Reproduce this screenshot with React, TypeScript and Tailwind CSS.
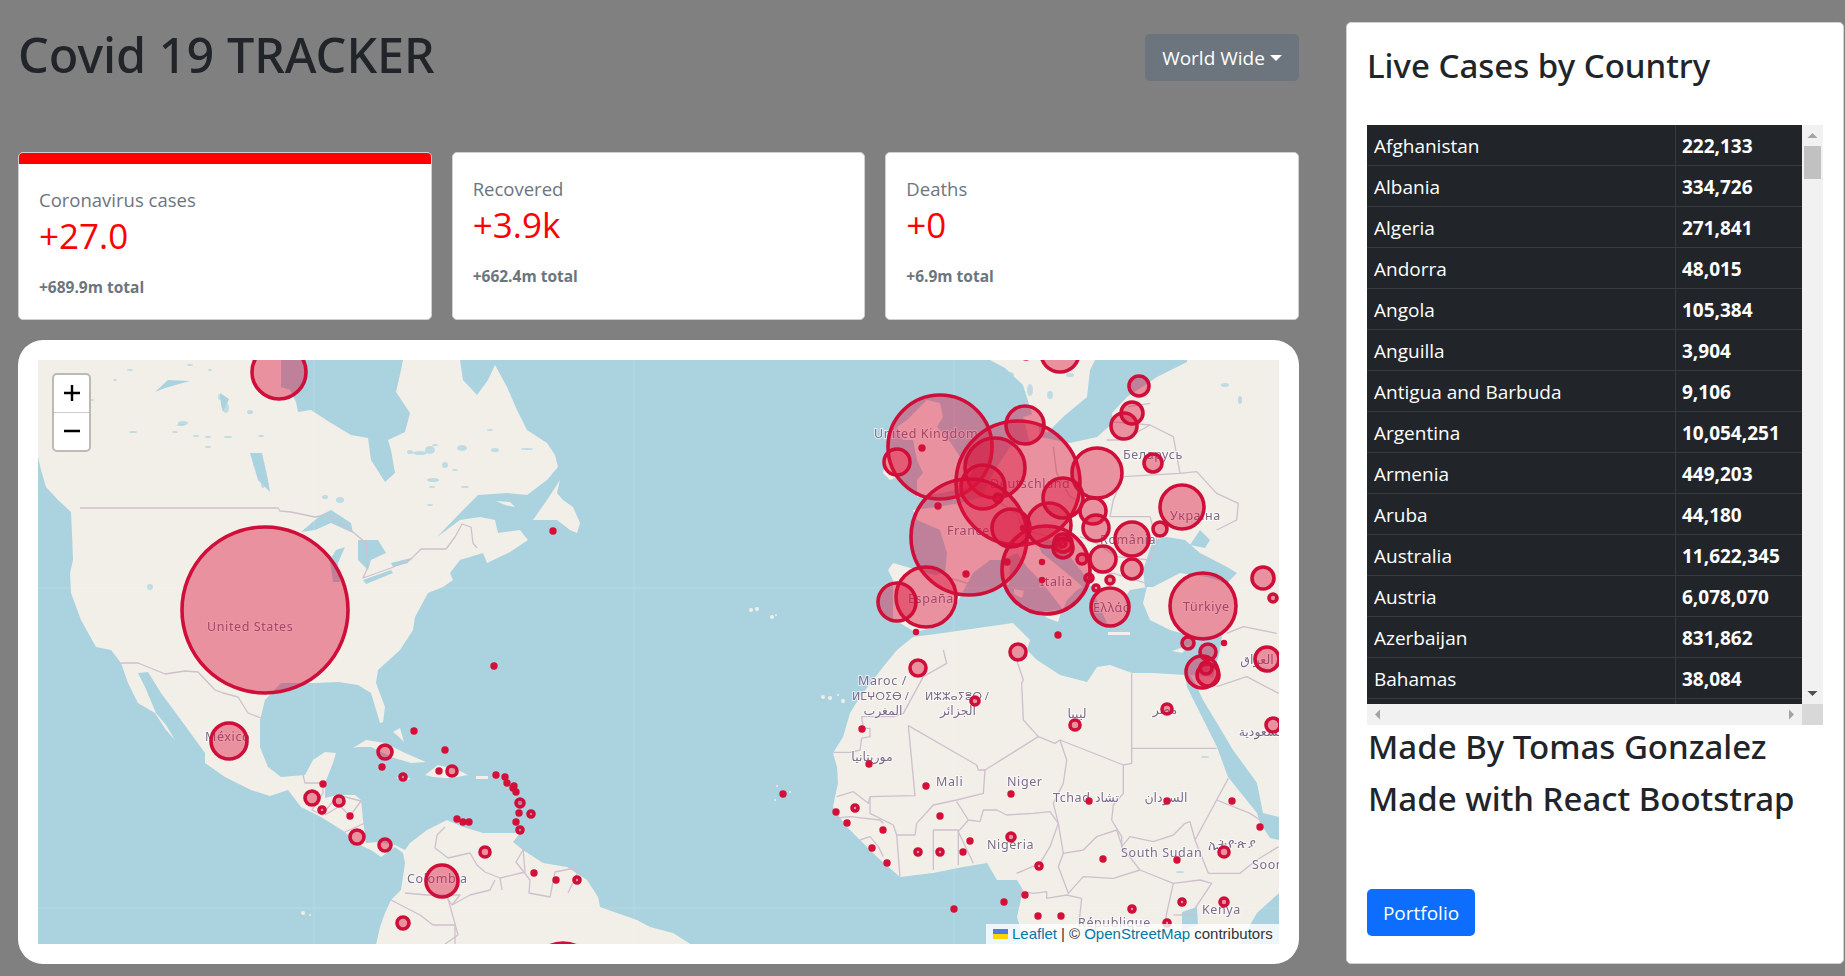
import React from "react";

const sans = "font-['Open_Sans','Noto_Sans',sans-serif]";
const heading = "font-['Noto_Sans','Open_Sans',sans-serif] font-medium";

const rows = [
  ["Afghanistan", "222,133"],
  ["Albania", "334,726"],
  ["Algeria", "271,841"],
  ["Andorra", "48,015"],
  ["Angola", "105,384"],
  ["Anguilla", "3,904"],
  ["Antigua and Barbuda", "9,106"],
  ["Argentina", "10,054,251"],
  ["Armenia", "449,203"],
  ["Aruba", "44,180"],
  ["Australia", "11,622,345"],
  ["Austria", "6,078,070"],
  ["Azerbaijan", "831,862"],
  ["Bahamas", "38,084"],
  ["", ""],
];

// x, y, r in page pixels
const circles: number[][] = [
  [279, 372, 28], [265, 610, 84], [229, 741, 19], [385, 752, 8], [403, 777, 4], [452, 771, 6], [312, 798, 8],
  [339, 801, 6], [322, 810, 4], [357, 837, 8], [385, 845, 7], [442, 881, 17], [485, 852, 6], [403, 923, 7],
  [520, 803, 5], [531, 814, 4], [520, 830, 4], [577, 880, 4], [563, 975, 33],
  [553, 531, 3], [494, 666, 3], [414, 731, 3], [445, 750, 3], [382, 767, 3], [439, 771, 3], [496, 775, 3],
  [323, 784, 3], [350, 816, 3], [505, 777, 3], [507, 783, 3], [514, 786, 3], [513, 788, 3], [516, 792, 3],
  [519, 813, 3], [516, 822, 3], [457, 819, 3], [463, 822, 3], [469, 822, 3], [534, 873, 3], [556, 880, 3],
  [940, 447, 53], [897, 462, 14], [1018, 483, 63], [995, 468, 31], [983, 487, 23], [1025, 425, 20], [1097, 473, 26],
  [969, 537, 59], [1046, 570, 45], [926, 597, 31], [897, 602, 20], [1011, 528, 20], [1049, 525, 23], [1063, 498, 21],
  [1093, 511, 14], [1096, 528, 14], [1132, 539, 18], [1182, 507, 23], [1160, 529, 8], [1103, 559, 14], [1132, 569, 11],
  [1110, 607, 20], [1203, 606, 34], [1263, 578, 12], [1273, 598, 5], [1153, 463, 10], [1124, 426, 14], [1132, 413, 12],
  [1139, 386, 11], [1063, 543, 10], [1062, 543, 5], [1063, 548, 11], [1089, 578, 5], [1110, 580, 5], [1082, 559, 6],
  [1096, 588, 4], [1188, 643, 7], [1208, 652, 9], [1202, 672, 17], [1208, 675, 12], [1206, 668, 7], [1267, 659, 13],
  [1018, 652, 9], [918, 668, 9], [1060, 353, 20], [1026, 354, 6],
  [922, 448, 3], [938, 506, 3], [966, 574, 3], [1007, 562, 3], [1042, 562, 2.5], [1042, 580, 2.5], [916, 632, 2.5],
  [1058, 635, 3], [1224, 643, 2.5], [998, 498, 5], [1023, 528, 2.5],
  [783, 794, 3], [836, 812, 3], [855, 808, 4], [847, 823, 3], [883, 830, 3], [872, 848, 3], [887, 863, 3], [918, 852, 4],
  [940, 852, 4], [963, 852, 3], [970, 841, 3], [940, 816, 3], [926, 786, 3], [869, 764, 3], [862, 729, 3], [975, 701, 5],
  [1075, 725, 6], [1167, 709, 6], [1011, 794, 3], [1011, 837, 5], [1039, 866, 4], [1089, 801, 3], [1167, 801, 3],
  [1232, 801, 3], [1260, 827, 3], [1224, 852, 6], [1177, 860, 3], [1103, 859, 3], [1182, 902, 4], [1224, 902, 5],
  [1132, 909, 4], [1167, 923, 4], [1025, 895, 3], [1004, 902, 3], [954, 909, 3], [1038, 916, 3], [1061, 916, 3], [1273, 725, 8],
];

// text, x, baseline, anchor
const labels: [string, number, number, "start" | "middle"][] = [
  ["United States", 207, 631, "start"], ["México", 205, 741, "start"], ["Colombia", 407, 883, "start"],
  ["United Kingdom", 874, 438, "start"], ["Deutschland", 990, 488, "start"], ["France", 947, 535, "start"],
  ["España", 908, 603, "start"], ["Italia", 1040, 586, "start"], ["Ελλάς", 1093, 612, "start"],
  ["Türkiye", 1183, 611, "start"], ["Україна", 1170, 520, "start"], ["România", 1100, 544, "start"],
  ["Беларусь", 1123, 459, "start"], ["Maroc /", 858, 685, "start"], ["ⵍⵎⵖⵔⵉⴱ /", 852, 700, "start"],
  ["ⵍⵣⵣⴰⵢⴻⵔ /", 925, 700, "start"], ["المغرب", 883, 715, "middle"], ["الجزائر", 958, 715, "middle"],
  ["موريتانيا", 872, 761, "middle"], ["Mali", 936, 786, "start"], ["Niger", 1007, 786, "start"], ["Tchad", 1053, 802, "start"],
  ["تشاد", 1107, 802, "middle"], ["السودان", 1166, 802, "middle"], ["Nigeria", 987, 849, "start"],
  ["South Sudan", 1121, 857, "start"], ["ليبيا", 1077, 718, "middle"], ["مصر", 1165, 714, "middle"],
  ["السعودية", 1262, 736, "middle"], ["العراق", 1257, 664, "middle"], ["ኢትዮጵያ", 1232, 848, "middle"],
  ["Soomaaliya", 1252, 869, "start"], ["Kenya", 1202, 914, "start"], ["République", 1078, 927, "start"],
];

const lakes: number[][] = [
  [183, 423, 5, 2], [228, 437, 4, 1], [196, 436, 3, 1], [175, 432, 3, 1], [208, 447, 3, 1], [261, 436, 3, 1], [340, 500, 4, 3],
  [420, 453, 7, 2], [430, 450, 5, 4], [462, 448, 5, 3], [400, 428, 6, 2], [433, 480, 6, 2], [445, 465, 3, 3], [455, 470, 3, 1],
  [430, 505, 3, 1], [150, 587, 3, 3], [64, 540, 2, 4], [490, 430, 3, 1], [527, 449, 6, 1], [220, 397, 2, 3], [226, 408, 3, 5],
  [250, 412, 3, 2], [181, 425, 4, 1], [133, 432, 4, 1], [208, 437, 3, 1], [255, 463, 2, 4], [263, 483, 2, 5], [325, 497, 3, 2],
  [381, 463, 2, 3], [410, 452, 3, 2], [435, 445, 3, 1], [495, 450, 4, 2], [465, 487, 4, 1], [432, 487, 3, 1], [92, 400, 2, 1],
  [115, 380, 2, 1], [130, 370, 3, 1], [190, 365, 3, 1], [210, 370, 2, 1], [1030, 390, 3, 6], [1050, 395, 3, 4], [1070, 375, 4, 2],
  [1010, 375, 4, 3], [1225, 385, 4, 2], [1240, 400, 2, 4], [1180, 872, 4, 1], [1205, 757, 4, 1],
];

const americas =
  "38,360 38,457 41,470 46,487 58,500 71,512 72,533 73,560 70,573 71,593 81,620 96,647 111,650 121,663 128,683 138,703 155,713 166,730 175,740 166,725 156,713 145,687 138,673 148,672 161,693 181,720 205,753 205,763 225,777 251,790 270,796 288,790 301,807 321,817 345,832 355,843 371,850 381,857 395,847 403,853 405,863 403,877 401,890 391,900 385,913 380,927 376,945 692,945 673,933 650,927 637,920 617,913 600,907 598,897 587,880 567,867 543,863 523,850 513,842 520,833 500,833 483,833 463,827 447,820 427,830 410,843 405,850 395,845 378,842 366,843 363,820 361,800 355,795 338,795 325,798 325,783 333,763 336,753 325,752 313,760 305,775 281,777 268,767 260,747 260,720 265,700 281,683 315,683 338,682 358,685 371,693 380,723 383,722 385,707 376,683 378,670 400,650 413,630 415,617 428,593 443,587 453,580 450,573 460,560 483,553 487,563 510,552 528,540 520,530 498,533 495,520 480,517 460,520 437,537 463,510 478,495 507,493 527,495 547,480 558,467 555,455 547,443 527,430 517,410 507,387 495,365 488,380 477,395 463,380 460,360";
const hudson =
  "281,360 281,387 290,390 296,402 298,412 311,410 331,423 351,435 368,438 371,460 385,482 395,473 391,450 388,440 405,432 410,413 396,392 401,370 403,360";
const eurasia =
  "1279,360 1279,817 1263,813 1257,783 1233,750 1217,723 1203,700 1195,683 1190,675 1213,677 1220,650 1222,636 1195,637 1170,630 1150,620 1143,603 1147,587 1130,590 1125,597 1128,617 1117,627 1107,623 1098,603 1093,590 1083,573 1067,553 1050,540 1047,537 1037,543 1042,553 1063,570 1083,587 1077,590 1067,600 1063,610 1058,603 1040,580 1027,567 1017,553 1003,560 990,560 973,573 960,597 950,617 933,628 915,632 900,623 893,620 893,580 888,570 893,563 935,575 945,573 947,553 940,530 917,520 913,510 937,507 960,503 982,497 993,473 1010,447 1030,443 1023,417 1037,413 1040,437 1070,443 1097,437 1113,423 1112,413 1127,397 1157,377 1187,362 1187,360";
const africa =
  "913,637 943,633 1013,623 1030,640 1027,650 1037,660 1060,675 1087,682 1097,667 1110,665 1132,673 1153,673 1185,675 1187,687 1200,713 1217,747 1228,777 1257,813 1260,823 1270,838 1279,840 1279,893 1257,913 1243,937 1240,945 1027,945 1023,937 1017,917 1023,890 1017,880 997,880 987,863 963,867 933,873 900,877 877,857 860,840 845,825 833,807 835,797 838,783 837,767 833,753 843,737 850,713 860,697 883,667 897,650";

function Poly({ points, fill }: { points: string; fill: string }) {
  return <polygon points={points} fill={fill} />;
}

function MapDrawing() {
  const land = "#f2efe9";
  const water = "#aad3df";
  return (
    <svg viewBox="38 360 1241 584" className="absolute inset-0 h-full w-full blur-[0.4px]">
      <rect x="38" y="360" width="1241" height="584" fill={water} />
      <Poly points={americas} fill={land} />
      <Poly points={hudson} fill={water} />
      <Poly points={eurasia} fill={land} />
      <Poly points={africa} fill={land} />
      {/* scandinavia, islands */}
      <Poly points="990,360 1005,368 1023,385 1033,417 1047,433 1063,417 1087,397 1090,370 1095,360" fill={land} />
      <Poly points="927,400 940,403 943,417 937,427 947,437 960,457 973,470 967,487 943,493 917,497 917,480 923,473 917,460 913,440 903,440 897,427 907,420" fill={land} />
      <Poly points="883,473 887,453 903,450 912,460 907,473 890,480" fill={land} />
      <Poly points="560,480 547,500 533,520 557,520 570,530 577,533 580,523 573,507 563,500 557,493" fill={land} />
      <Poly points="353,748 366,740 385,743 405,753 426,762 411,763 391,757 371,747 358,747" fill={land} />
      <Poly points="425,775 438,765 458,770 468,775 452,778 445,778 433,777" fill={land} />
      <Poly points="476,776 488,776 488,779 476,779" fill={land} />
      <Poly points="396,777 411,778 408,780 398,779" fill={land} />
      <Poly points="1014,589 1024,591 1022,598 1014,594" fill={land} />
      <Poly points="1005,532 1011,534 1010,552 1004,553" fill={land} />
      <Poly points="1001,563 1010,565 1009,585 1001,583" fill={land} />
      <Poly points="1042,612 1062,609 1058,622 1047,618" fill={land} />
      <Poly points="1108,632 1130,632 1130,635 1108,635" fill={land} />
      <Poly points="1172,651 1190,645 1182,653" fill={land} />
      <Poly points="915,610 916,612 914,612" fill={land} />
      <Poly points="496,501 510,502 515,507 505,505" fill={land} />
      <Poly points="393,732 400,728 404,742 398,736" fill={land} />
      {[[751, 610, 2], [757, 609, 2], [772, 617, 2], [776, 615, 1], [823, 697, 2], [830, 698, 2], [843, 701, 2], [838, 695, 1], [777, 786, 1], [790, 792, 1], [775, 800, 1], [303, 913, 2], [310, 915, 1]].map(([cx, cy, r], i) => (
        <circle key={i} cx={cx} cy={cy} r={r} fill={land} />
      ))}

      {/* lakes and inland seas */}
      <Poly points="301,532 321,515 331,510 351,523 353,533 331,523 315,530" fill={water} />
      <Poly points="330,560 333,582 340,582 338,563 345,547 336,550" fill={water} />
      <Poly points="358,540 378,540 386,553 371,560 368,570 358,560" fill={water} />
      <Poly points="363,580 391,570 393,573 366,584" fill={water} />
      <Poly points="391,563 411,558 408,563 393,567" fill={water} />
      <Poly points="155,392 168,380 190,381 165,388" fill={water} />
      <Poly points="250,453 262,453 268,480 270,492 258,480" fill={water} />
      <Poly points="220,393 229,399 223,412 221,405" fill={water} />
      <Poly points="1143,570 1153,540 1167,537 1185,540 1200,553 1227,567 1237,573 1227,583 1207,577 1180,573 1153,587 1145,587" fill={water} />
      <Poly points="1190,545 1200,530 1210,540 1205,548" fill={water} />
      <Poly points="1182,912 1197,907 1198,925 1182,930" fill={water} />
      {lakes.map(([cx, cy, rx, ry], i) => (
        <ellipse key={i} cx={cx} cy={cy} rx={rx} ry={ry} fill={water} opacity={0.7} />
      ))}

      {/* tile seams */}
      <g stroke="#ffffff" strokeOpacity="0.14" strokeWidth="1">
        <path d="M314 360V944M634 360V944M954 360V944M38 588H1279M38 908H1279" />
      </g>

      {/* borders */}
      <g fill="none" stroke="#cfc0cd" strokeWidth="1.3" strokeLinejoin="round">
        <polyline points="80,508 278,508 280,511 291,512 315,517 326,515 353,532 366,543 368,567 363,578 391,568 410,560 421,549 446,549 455,537 462,524 471,527 473,543 477,548" />
        <polyline points="121,663 138,663 165,674 185,671 198,672 215,690 223,693 238,697 248,713 261,718" />
        <polyline points="303,775 305,783 323,783 323,793 312,810 322,815 338,795 361,801 350,816 340,806 325,815" />
        <polyline points="345,832 365,823" />
        <polyline points="445,827 437,835 435,848 448,858 470,853 477,865 485,872 500,878 502,890" />
        <polyline points="500,878 525,872 523,848" />
        <polyline points="523,850 516,862 530,880 529,893 550,897 555,872 575,868 578,872 568,893" />
        <polyline points="405,893 427,895 445,895 452,905 470,895 490,890 495,880" />
        <polyline points="391,900 420,915 433,925 455,925 455,944" />
        <polyline points="452,905 460,895 447,895 458,935 445,944" />
      </g>
      <g transform="translate(820 650) scale(0.33333)" fill="none" stroke="#cfc0cd" strokeWidth="4" strokeLinejoin="round">
        <polyline points="40,307 90,307 120,300 125,265 150,260 150,235 130,235 125,200 220,200 250,190 310,80 380,40 370,0" />
        <polyline points="265,227 470,345 475,360 495,360 655,260 705,280 720,270 910,345 935,340 935,70" />
        <polyline points="590,30 610,90 605,100 610,210 655,260" />
        <polyline points="265,227 285,437 150,440 145,460 100,425 50,440" />
        <polyline points="150,440 150,490 220,525 230,555 285,555 290,520 340,465 410,450 490,430 495,360" />
        <polyline points="410,455 445,510 480,515 490,480 530,480 560,495 640,490 690,485 715,520 690,590 660,640 590,670" />
        <polyline points="720,270 740,330 730,400 700,460 715,520 730,610 790,600 830,560 890,540 905,585" />
        <polyline points="910,345 910,430 880,465 875,510 905,560 905,590 930,560 1000,575 1060,555 1095,520 1110,515 1125,570 1190,450 1225,385" />
        <polyline points="935,295 1190,295" />
        <polyline points="340,540 340,660" />
        <polyline points="340,540 415,540 415,645" />
        <polyline points="445,510 415,545 460,640" />
        <polyline points="230,555 240,680" />
        <polyline points="120,570 150,560 175,590 190,620" />
        <polyline points="40,505 90,500 180,510 190,520" />
        <polyline points="730,610 715,650 745,730 790,680 880,685 960,660 1060,700 1140,690 1175,700 1125,775" />
        <polyline points="1060,700 1040,790 1030,860" />
        <polyline points="1125,795 1060,795" />
        <polyline points="1165,670 1260,670 1310,630 1376,590" />
        <polyline points="905,590 960,660" />
        <polyline points="1125,570 1165,670" />
        <polyline points="590,720 640,730 680,725 680,745 740,735 785,745 770,885" />
        <polyline points="1190,450 1290,490 1320,510" />
        <polyline points="1190,110 1280,80 1376,130" />
      </g>
      <g transform="translate(850 340) scale(0.33333)" fill="none" stroke="#cfc0cd" strokeWidth="4" strokeLinejoin="round">
        <polyline points="420,470 500,520 520,570 600,590" />
        <polyline points="285,710 370,735" />
        <polyline points="610,320 620,400 660,470 700,490" />
        <polyline points="820,410 790,480 780,530 900,530 920,600 900,660 800,650 740,610 690,590" />
        <polyline points="820,410 990,400 1040,395 1100,460 1165,490 1160,540 1100,570" />
        <polyline points="770,300 820,300 900,255 970,290 990,400" />
        <polyline points="780,245 900,255" />
        <polyline points="835,200 900,190" />
        <polyline points="890,730 790,700 740,700" />
        <polyline points="1280,880 1180,860 1130,880" />
      </g>

      {/* place names */}
      <g fill="#7b6a8a" stroke="#ffffff" strokeOpacity="0.65" strokeWidth="2" fontSize="12.5" letterSpacing="0.6" style={{ paintOrder: "stroke", fontFamily: "'Noto Sans','DejaVu Sans',sans-serif" }}>
        {labels.map(([t, x, y, a]) => (
          <text key={t + x} x={x} y={y} textAnchor={a} fontSize={t.startsWith("ⵍ") ? 11 : undefined} letterSpacing={t.startsWith("ⵍ") ? 0 : undefined}>
            {t}
          </text>
        ))}
      </g>

      {/* case circles */}
      <g fill="#dc143c" fillOpacity="0.43" stroke="#cf0f3a" strokeWidth="3.6">
        {circles.map(([x, y, r], i) =>
          r <= 3 ? (
            <circle key={i} cx={x} cy={y} r={r + 0.7} fillOpacity="1" strokeWidth="0" fill="#d40f38" />
          ) : (
            <circle key={i} cx={x} cy={y} r={r - 1} />
          )
        )}
      </g>
    </svg>
  );
}

function StatCard({ title, value, total, active }: { title: string; value: string; total: string; active?: boolean }) {
  return (
    <div className="h-[168px] w-[414px] overflow-hidden rounded-[5px] border border-[#d0d0d0] bg-white">
      {active && <div className="h-[11px] bg-[#ff0000]" />}
      <div className="px-[20px] pt-[21px]">
        <div className="text-[18.5px] leading-[30px] text-[#6c757d]">{title}</div>
        <div className="text-[35px] leading-[42px] text-[#ff0000]">{value}</div>
        <div className="mt-[18px] text-[15.5px] leading-[24px] font-bold text-[#6c757d]">{total}</div>
      </div>
    </div>
  );
}

function LiveTable() {
  return (
    <div className="flex h-[600px] w-[456px] flex-col">
      <div className="flex h-[579px]">
        <div className="h-[579px] w-[435px] overflow-hidden bg-[#212529] text-[19px] text-white">
          {rows.map(([name, cases], i) => (
            <div key={i} className="flex h-[41px] border-b border-[#373b3e]">
              <div className="w-[309px] border-r border-[#373b3e] pl-[7px] pt-[3px] leading-[37px]">{name}</div>
              <div className="pl-[6px] pt-[3px] leading-[37px] font-bold">{cases}</div>
            </div>
          ))}
        </div>
        <div className="flex h-[579px] w-[21px] flex-col items-center bg-[#f1f1f1]">
          <svg width="21" height="21" viewBox="0 0 21 21">
            <path d="M5.5 13L10.5 8L15.5 13Z" fill="#a3a3a3" />
          </svg>
          <div className="h-[33px] w-[17px] bg-[#c1c1c1]" />
          <div className="flex-1" />
          <svg width="21" height="21" viewBox="0 0 21 21">
            <path d="M5.5 8L10.5 13L15.5 8Z" fill="#505050" />
          </svg>
        </div>
      </div>
      <div className="flex h-[21px]">
        <div className="flex w-[435px] items-center justify-between bg-[#f1f1f1]">
          <svg width="21" height="21" viewBox="0 0 21 21">
            <path d="M13 5.5L8 10.5L13 15.5Z" fill="#a3a3a3" />
          </svg>
          <svg width="21" height="21" viewBox="0 0 21 21">
            <path d="M8 5.5L13 10.5L8 15.5Z" fill="#a3a3a3" />
          </svg>
        </div>
        <div className="w-[21px] bg-[#d8d8d8]" />
      </div>
    </div>
  );
}

export default function App() {
  return (
    <div className={`flex h-[976px] w-[1845px] overflow-hidden bg-[#808080] text-[#212529] ${sans}`}>
      <div className="w-[1281px] ml-[18px] pt-[24px]">
        <div className="flex h-[128px] items-start justify-between">
          <h1 className={`text-[48.5px] leading-[60px] text-[#212529] ${heading}`}>Covid 19 TRACKER</h1>
          <button className="mt-[10px] flex h-[47px] w-[154px] items-center justify-center rounded-[5px] bg-[#6c757d] pt-[1px] text-[19px] text-white">
            World Wide
            <span className="ml-[5px] h-0 w-0 border-x-[6px] border-t-[6px] border-x-transparent border-t-white" />
          </button>
        </div>
        <div className="flex gap-[20px]">
          <StatCard active title="Coronavirus cases" value="+27.0" total="+689.9m total" />
          <StatCard title="Recovered" value="+3.9k" total="+662.4m total" />
          <StatCard title="Deaths" value="+0" total="+6.9m total" />
        </div>
        <div className="mt-[20px] h-[624px] rounded-[25px] bg-white p-[20px]">
          <div className="relative h-[584px] w-[1241px] overflow-hidden">
            <MapDrawing />
            <div className="absolute left-[14px] top-[13px] w-[39px] overflow-hidden rounded-[5px] border-2 border-[#bcbab5] bg-white text-black">
              <div className="flex h-[38px] items-center justify-center border-b border-[#ccc] pb-[2px]">
                <svg width="18" height="18" viewBox="0 0 18 18">
                  <path d="M9 1V17M1 9H17" stroke="#000" strokeWidth="2.4" />
                </svg>
              </div>
              <div className="flex h-[37px] items-center justify-center pb-[2px]">
                <svg width="18" height="18" viewBox="0 0 18 18">
                  <path d="M1 9H17" stroke="#000" strokeWidth="2.4" />
                </svg>
              </div>
            </div>
            <div className="absolute bottom-0 right-0 flex h-[20px] w-[293px] items-center whitespace-nowrap bg-white/80 pl-[7px] font-['Liberation_Sans',sans-serif] text-[15px] text-[#333]">
              <svg width="15" height="10" viewBox="0 0 15 10" className="mr-[4px]">
                <rect width="15" height="5" fill="#4c7be1" />
                <rect y="5" width="15" height="5" fill="#ffd500" />
              </svg>
              <span className="text-[#0078a8]">Leaflet</span>
              <span className="mx-[4px]">|</span>
              <span>©&nbsp;</span>
              <span className="text-[#0078a8]">OpenStreetMap</span>
              <span>&nbsp;contributors</span>
            </div>
          </div>
        </div>
      </div>
      <div className="ml-[47px] mt-[22px] h-[942px] w-[498px] rounded-[5px] border border-[#d0d0d0] bg-white pl-[20px] pt-[19px]">
        <h2 className={`h-[83px] text-[33px] leading-[48px] ${heading}`}>Live Cases by Country</h2>
        <LiveTable />
        <div className={`pl-[1px] text-[33px] ${heading}`}>
          <div className="h-[44px] leading-[44px]">Made By Tomas Gonzalez</div>
          <div className="mt-[8px] h-[44px] leading-[44px]">Made with React Bootstrap</div>
        </div>
        <button className="mt-[68px] h-[47px] w-[108px] rounded-[5px] bg-[#0d6efd] pt-[1px] text-[19px] text-white">Portfolio</button>
      </div>
    </div>
  );
}
